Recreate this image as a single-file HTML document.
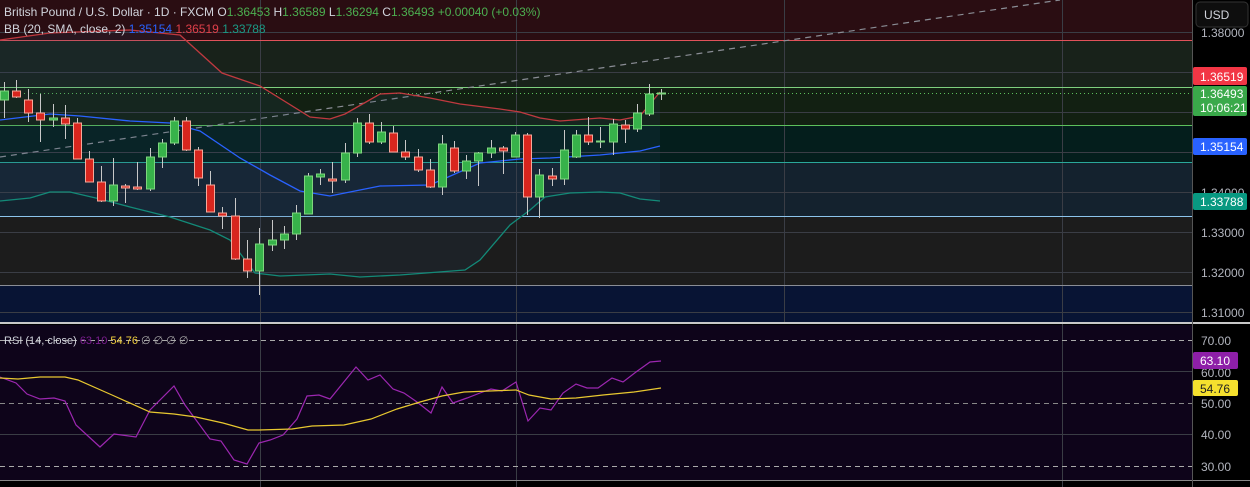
<!DOCTYPE html><html><head><meta charset="utf-8"><style>
body{margin:0;width:1250px;height:487px;background:#000;overflow:hidden;font-family:"Liberation Sans",sans-serif}
svg{position:absolute;left:0;top:0}
.t{font-size:12px}
</style></head><body>
<svg width="1250" height="487" xmlns="http://www.w3.org/2000/svg">
<rect x="0" y="0" width="1192" height="40" fill="#2a0d12"/>
<rect x="0" y="40" width="1192" height="47" fill="#18221a"/>
<rect x="0" y="87" width="1192" height="38" fill="#122012"/>
<rect x="0" y="125" width="1192" height="37" fill="#041e1c"/>
<rect x="0" y="162" width="1192" height="54" fill="#14222e"/>
<rect x="0" y="216" width="1192" height="69" fill="#1c1c1c"/>
<rect x="0" y="285" width="1192" height="38" fill="#081434"/>
<rect x="0" y="325" width="1192" height="155" fill="#0e041a"/>
<g stroke="#3a3d45" stroke-width="1">
<line x1="0" y1="32.5" x2="1192" y2="32.5"/><line x1="0" y1="72.5" x2="1192" y2="72.5"/><line x1="0" y1="112.5" x2="1192" y2="112.5"/><line x1="0" y1="152.5" x2="1192" y2="152.5"/><line x1="0" y1="192.5" x2="1192" y2="192.5"/><line x1="0" y1="232.5" x2="1192" y2="232.5"/><line x1="0" y1="272.5" x2="1192" y2="272.5"/><line x1="0" y1="312.5" x2="1192" y2="312.5"/>
<line x1="0" y1="371.5" x2="1192" y2="371.5"/><line x1="0" y1="434.5" x2="1192" y2="434.5"/>
<line x1="260.5" y1="0" x2="260.5" y2="487"/><line x1="516.5" y1="0" x2="516.5" y2="487"/><line x1="784.5" y1="0" x2="784.5" y2="323"/><line x1="1062.5" y1="0" x2="1062.5" y2="487"/>
</g>
<g stroke-width="1">
<line x1="0" y1="40.5" x2="1192" y2="40.5" stroke="#e0525a"/>
<line x1="0" y1="87.5" x2="1192" y2="87.5" stroke="#7ed07e"/>
<line x1="0" y1="125.5" x2="1192" y2="125.5" stroke="#5cc05c"/>
<line x1="0" y1="162.5" x2="1192" y2="162.5" stroke="#2aa89a"/>
<line x1="0" y1="216.5" x2="1192" y2="216.5" stroke="#8cc4ec"/>
<line x1="0" y1="285.5" x2="1192" y2="285.5" stroke="#8a8d95"/>
<line x1="0" y1="323" x2="1250" y2="323" stroke="#c8c8c8" stroke-width="2"/>
<line x1="0" y1="480.5" x2="1250" y2="480.5" stroke="#888"/>
<line x1="1192.5" y1="0" x2="1192.5" y2="487" stroke="#555"/>
<line x1="0" y1="93.5" x2="1192" y2="93.5" stroke="#5cc05c" stroke-dasharray="1,3"/>
<line x1="0" y1="157" x2="1060" y2="0" stroke="#8a8d95" stroke-dasharray="6,5" stroke-width="1.2"/>
<line x1="0" y1="340.5" x2="1192" y2="340.5" stroke="#aaa" stroke-dasharray="5,4"/>
<line x1="0" y1="403.5" x2="1192" y2="403.5" stroke="#888" stroke-dasharray="5,4"/>
<line x1="0" y1="466.5" x2="1192" y2="466.5" stroke="#aaa" stroke-dasharray="5,4"/>
</g>
<polygon fill="#2a4a6a" fill-opacity="0.15" points="0,40 50,33 130,30 180,35 222,73 260,86 310,117 330,119 345,114 380,94 400,93 430,98 460,104 500,109 520,112 560,121 600,118 620,120 640,116 660,92 660,201 640,199 620,193 600,192 570,193 545,197 530,210 510,225 480,260 465,270 400,275 360,277 330,274 280,276 255,273 230,240 210,230 170,217 130,207 100,199 70,192 50,192 30,198 0,201"/>
<g fill="none" stroke-width="1.3">
<polyline stroke="#c0393f" points="0,40 50,33 130,30 180,35 222,73 260,86 310,117 330,119 345,114 380,94 400,93 430,98 460,104 500,109 520,112 540,118 560,121 600,118 620,120 640,116 660,92"/>
<polyline stroke="#2962ff" points="0,120 50,114 80,116 130,121 170,123 200,131 240,158 270,175 300,191 330,196 380,186 430,185 480,163 520,159 550,158 600,155 640,151 660,146"/>
<polyline stroke="#138a78" points="0,201 30,198 50,192 70,192 100,199 130,207 170,217 210,230 230,240 255,273 280,276 330,274 360,277 400,275 465,270 480,260 510,225 530,210 545,197 570,193 600,192 620,193 640,199 660,201"/>
</g>
<g id="c" stroke-width="1"></g>
<g fill="none" stroke-width="1.2">
<polyline stroke="#9c27b0" points="0,377 16,383 27,394 40,399 54,398 65,401 76,425 100,447 114,434 136,437 150,410 174,386 185,405 210,439 221,441 234,460 247,464 259,443 270,440 283,435 297,419 307,396 319,395 330,399 356,367 368,380 380,375 393,389 404,393 417,402 431,413 442,387 453,403 467,398 480,393 491,389 502,391 516,382 528,421 540,408 551,410 563,393 576,384 587,388 598,388 612,378 623,382 636,372 650,362 661,361"/>
<polyline stroke="#e8c830" points="0,378 18,379 40,377 65,377 78,380 112,395 150,412 174,414 196,417 223,423 248,430 259,430 292,429 312,426 344,425 371,419 397,409 420,402 442,396 464,392 516,390 529,395 551,399 576,398 603,395 634,392 661,388"/>
</g>
<g class="t">
<text x="4" y="16" fill="#d1d4dc">British Pound / U.S. Dollar · 1D · FXCM <tspan>O</tspan><tspan fill="#4caf50">1.36453</tspan> <tspan>H</tspan><tspan fill="#4caf50">1.36589</tspan> <tspan>L</tspan><tspan fill="#4caf50">1.36294</tspan> <tspan>C</tspan><tspan fill="#4caf50">1.36493</tspan> <tspan fill="#4caf50">+0.00040 (+0.03%)</tspan></text>
<text x="4" y="33" fill="#d1d4dc">BB (20, SMA, close, 2) <tspan fill="#2962ff">1.35154</tspan> <tspan fill="#e0404a">1.36519</tspan> <tspan fill="#1a9a86">1.33788</tspan></text>
<text x="4" y="344" fill="#d1d4dc" font-size="11">RSI (14, close) <tspan fill="#7b1f8f">63.10</tspan> <tspan fill="#f0d040">54.76</tspan> <tspan fill="#aaa">∅ ∅ ∅ ∅</tspan></text>
</g>
<rect x="1196" y="2" width="52" height="25" rx="4" fill="#0e0e0e" stroke="#333"/>
<text x="1204" y="19" fill="#d1d4dc" class="t">USD</text>
<g fill="#b2b5be" class="t">
<text x="1201" y="37">1.38000</text><text x="1201" y="197">1.34000</text><text x="1201" y="237">1.33000</text><text x="1201" y="277">1.32000</text><text x="1201" y="317">1.31000</text>
<text x="1201" y="345">70.00</text><text x="1201" y="408">50.00</text><text x="1201" y="439">40.00</text><text x="1201" y="471">30.00</text><text x="1201" y="377">60.00</text>
</g>
<rect x="1193" y="67" width="54" height="18" rx="2" fill="#f23645"/><text x="1200" y="81" fill="#fff" class="t">1.36519</text>
<rect x="1193" y="86" width="54" height="30" rx="2" fill="#3aa94a"/><text x="1200" y="98" fill="#fff" class="t">1.36493</text><text x="1200" y="112" fill="#fff" class="t">10:06:21</text>
<rect x="1193" y="138" width="54" height="17" rx="2" fill="#2962ff"/><text x="1200" y="151" fill="#fff" class="t">1.35154</text>
<rect x="1193" y="193" width="54" height="17" rx="2" fill="#089981"/><text x="1200" y="206" fill="#fff" class="t">1.33788</text>
<rect x="1193" y="352" width="45" height="17" rx="2" fill="#8e1fa8"/><text x="1200" y="365" fill="#fff" class="t">63.10</text>
<rect x="1193" y="380" width="45" height="16" rx="2" fill="#f5e02e"/><text x="1200" y="393" fill="#222" class="t">54.76</text>
</svg>
<script>
var d=[[4,'g',91,100,82,118],[16,'r',91,97,80,98],[28,'r',100,113,89,122],[40,'r',113,120,94,142],[53,'g',118,120,104,127],[65,'r',118,124,105,139],[77,'r',123,159,118,159],[89,'r',159,182,151,182],[101,'r',182,201,166,202],[113,'g',185,201,158,206],[125,'r',186,188,184,203],[137,'r',187,189,162,190],[150,'g',157,189,148,191],[162,'g',143,157,139,168],[174,'g',121,143,117,145],[186,'r',121,150,117,151],[198,'r',150,178,147,186],[210,'r',185,212,171,212],[222,'r',213,216,207,229],[235,'r',216,259,198,260],[247,'r',259,271,240,278],[259,'g',244,271,228,295],[272,'g',240,245,220,251],[284,'g',234,240,226,249],[296,'g',213,234,205,240],[308,'g',176,214,173,214],[320,'g',174,177,169,185],[332,'r',179,181,162,193],[345,'g',153,180,143,183],[357,'g',123,153,118,157],[369,'r',123,142,114,144],[381,'g',132,142,122,144],[393,'r',133,152,126,152],[405,'r',152,157,140,160],[418,'r',157,170,149,172],[430,'r',170,187,159,188],[442,'g',144,187,135,195],[454,'r',148,171,141,173],[466,'g',161,171,155,179],[478,'g',153,161,152,186],[491,'g',148,153,140,158],[503,'r',148,151,146,174],[515,'g',135,157,132,157],[527,'r',135,197,133,215],[539,'g',175,197,169,218],[552,'r',176,179,168,186],[564,'g',150,179,130,185],[576,'g',135,157,130,158],[588,'r',135,142,117,145],[600,'g',141,142,127,148],[613,'g',124,142,119,155],[625,'r',125,129,120,143],[637,'g',113,129,104,132],[649,'g',94,114,84,116],[661,'g',93,94,89,100]];
var s='';d.forEach(function(c){var f=c[1]=='g'?'#37b24a':'#d8261e',k=c[1]=='g'?'#7ed67e':'#f6a89a';s+='<line x1="'+(c[0]+.5)+'" x2="'+(c[0]+.5)+'" y1="'+c[4]+'" y2="'+c[5]+'" stroke="#c8c8c8"/>';s+='<rect x="'+(c[0]-3.5)+'" y="'+c[2]+'" width="8" height="'+Math.max(1,c[3]-c[2])+'" fill="'+f+'" stroke="'+k+'"/>';});
document.getElementById('c').innerHTML=s;
</script>
</body></html>
